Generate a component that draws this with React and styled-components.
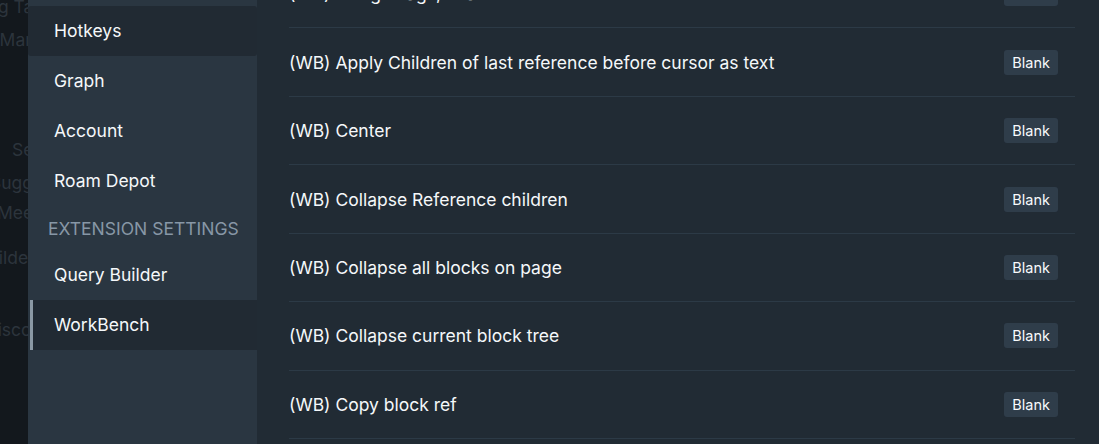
import React from "react";
import styled, { createGlobalStyle } from "styled-components";

const GlobalStyle = createGlobalStyle`
  html, body {
    margin: 0;
    padding: 0;
    background: #13181d;
    overflow: hidden;
  }
  body {
    font-family: Inter, "Noto Sans", "Liberation Sans", sans-serif;
    -webkit-font-smoothing: antialiased;
  }
`;

// what shows of the main app behind the dialog overlay
const backdropLines = [
  { text: "Sorting Tags", shift: 51, gap: 0 },
  { text: "Task Manager", shift: 44, gap: 11 },
  { text: "Search", shift: -12, gap: 88 },
  { text: "Suggestions", shift: 10, gap: 11 },
  { text: "Meetings", shift: 3, gap: 8 },
  { text: "Builder", shift: 23, gap: 23 },
  { text: "Discourse", shift: 15, gap: 50 },
];

const sideItems = [
  { label: "Hotkeys", state: "hover" },
  { label: "Graph" },
  { label: "Account" },
  { label: "Roam Depot" },
  { header: "Extension Settings" },
  { label: "Query Builder" },
  { label: "WorkBench", state: "active" },
];

const commands = [
  "(WB) Assign Tags, Aliases",
  "(WB) Apply Children of last reference before cursor as text",
  "(WB) Center",
  "(WB) Collapse Reference children",
  "(WB) Collapse all blocks on page",
  "(WB) Collapse current block tree",
  "(WB) Copy block ref",
  "(WB) Copy block ref as alias",
];

export default function App() {
  return (
    <>
      <GlobalStyle />
      <Screen>
        <Backdrop>
          {backdropLines.map((l) => (
            <FadedLine key={l.text} $shift={l.shift} $gap={l.gap}>
              {l.text}
            </FadedLine>
          ))}
        </Backdrop>
        <Dialog>
          <Sidebar>
            {sideItems.map((it) =>
              it.header ? (
                <SectionHeader key={it.header}>{it.header}</SectionHeader>
              ) : (
                <NavItem key={it.label} $state={it.state}>
                  {it.label}
                </NavItem>
              )
            )}
          </Sidebar>
          <Panel>
            <CommandList>
              {commands.map((c) => (
                <CommandRow key={c}>
                  <CommandName>{c}</CommandName>
                  <Hotkey>Blank</Hotkey>
                </CommandRow>
              ))}
            </CommandList>
          </Panel>
        </Dialog>
      </Screen>
    </>
  );
}

const Screen = styled.div`
  display: flex;
  width: 1099px;
  height: 444px;
  overflow: hidden;
  background: #13181d;
`;

const Backdrop = styled.div`
  width: 28px;
  flex-shrink: 0;
  overflow: hidden;
  display: flex;
  flex-direction: column;
  margin-top: -4px;
`;

const FadedLine = styled.div`
  width: 28px;
  overflow: hidden;
  white-space: nowrap;
  font-size: 17.5px;
  line-height: 22px;
  color: #2c343c;
  text-indent: ${(p) => -p.$shift}px;
  margin-top: ${(p) => p.$gap}px;
`;

const Dialog = styled.div`
  flex: 1;
  display: flex;
  min-width: 0;
`;

const Sidebar = styled.nav`
  width: 229px;
  flex-shrink: 0;
  background: #2a3641;
  padding-top: 6px;
  display: flex;
  flex-direction: column;
`;

const NavItem = styled.div`
  height: 50px;
  display: flex;
  align-items: center;
  padding-left: ${(p) => (p.$state === "active" ? "21px" : "26px")};
  padding-bottom: 1px;
  box-sizing: border-box;
  margin-left: ${(p) => (p.$state === "active" ? "2px" : "0")};
  border-left: ${(p) => (p.$state === "active" ? "3px solid #8a98a4" : "none")};
  border-radius: ${(p) => (p.$state === "hover" ? "3px" : "0")};
  background: ${(p) => (p.$state ? "#212a33" : "transparent")};
  color: #f5f8fa;
  font-size: 17.5px;
`;

const SectionHeader = styled.div`
  height: 44px;
  display: flex;
  align-items: center;
  padding-left: 20px;
  color: #8797a6;
  font-size: 17.5px;
  text-transform: uppercase;
`;

const Panel = styled.main`
  flex: 1;
  background: #212b34;
  padding: 0 24px 0 32px;
  overflow: hidden;
`;

const CommandList = styled.div`
  margin-top: -40px;
  display: flex;
  flex-direction: column;
`;

const CommandRow = styled.div`
  height: 68.45px;
  box-sizing: border-box;
  flex-shrink: 0;
  display: flex;
  align-items: center;
  justify-content: space-between;
  padding-right: 17px;
  border-bottom: 1px solid #2c3a46;
`;

const CommandName = styled.span`
  color: #f5f8fa;
  font-size: 17.5px;
`;

const Hotkey = styled.span`
  background: #2f3d4a;
  color: #f8fafc;
  font-size: 14.5px;
  line-height: 17px;
  padding: 4px 8px;
  border-radius: 3px;
`;
